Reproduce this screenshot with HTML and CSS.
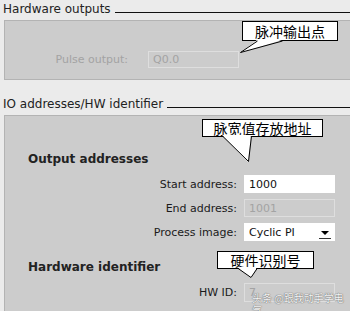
FILE: index.html
```html
<!DOCTYPE html>
<html lang="en">
<head>
    <meta charset="UTF-8">
    <meta name="viewport" content="width=device-width, initial-scale=1.0">
    <title>Pulse generator properties</title>
    <link rel="stylesheet" href="styles.css">
</head>
<body>
    <div class="page">
        <section class="group">
            <div class="group-head">
                <span class="group-title">Hardware outputs</span>
                <span class="group-rule"></span>
            </div>
            <div class="panel panel-outputs">
                <div class="pulse-row">
                    <span class="pulse-label">Pulse output:</span>
                    <span class="field field-off">Q0.0</span>
                </div>
            </div>
        </section>

        <section class="group group-io">
            <div class="group-head">
                <span class="group-title">IO addresses/HW identifier</span>
                <span class="group-rule"></span>
            </div>
            <div class="panel panel-io">
                <h3 class="sub-head">Output addresses</h3>
                <div class="form-grid">
                    <label class="form-label">Start address:</label>
                    <span class="field field-on">1000</span>
                    <label class="form-label">End address:</label>
                    <span class="field field-off">1001</span>
                    <label class="form-label">Process image:</label>
                    <span class="field field-on field-select">Cyclic PI<span class="drop-btn"></span></span>
                </div>
                <h3 class="sub-head sub-head-hw">Hardware identifier</h3>
                <div class="form-grid">
                    <label class="form-label">HW ID:</label>
                    <span class="field field-off field-tall">7</span>
                </div>
            </div>
        </section>

        <!-- annotations -->
        <div class="note note-pulse">脉冲输出点</div>
        <div class="note note-addr">脉宽值存放地址</div>
        <div class="note note-hw">硬件识别号</div>
        <svg class="note-tails" width="350" height="311" viewBox="0 0 350 311">
            <polygon points="257,40 240,53 282,40" fill="#fff"/>
            <polyline points="257.5,41 240.5,52.5 282.5,41" fill="none" stroke="#000" stroke-width="1"/>
            <polygon points="222,135 248,162 251,135" fill="#fff"/>
            <polyline points="222.5,136 248.5,161.5 251.5,136" fill="none" stroke="#000" stroke-width="1"/>
            <polygon points="237,267 251,278 257,267" fill="#fff"/>
            <polyline points="237.5,268 251,277.5 257.5,268" fill="none" stroke="#000" stroke-width="1"/>
        </svg>
        <div class="watermark">头条 @跟我动手学电气</div>
    </div>
</body>
</html>
```

FILE: styles.css
```css
/* 기본 */
body {
    margin: 0;
    background: #ebebeb;
    font-family: 'DejaVu Sans', sans-serif;
    color: #1a1a1a;
    overflow: hidden;
}

.page {
    position: relative;
    width: 350px;
    height: 311px;
    overflow: hidden;
}

/* group header with rule */
.group-head {
    display: flex;
    align-items: flex-start;
    height: 19px;
    padding: 1px 0 0 3px;
}

.group-title {
    font-size: 12px;
    line-height: 16px;
    color: #222;
    white-space: nowrap;
}

.group-rule {
    flex: 1;
    height: 1px;
    background: #111;
    margin: 11px 0 0 4px;
}

.group-io {
    margin-top: 15px;
}

.panel {
    margin-left: 4px;
    background: #cccccc;
    border: 1px solid #b3b3b3;
    border-right: none;
}

.panel-outputs {
    padding: 30px 0 11px;
}

.pulse-row {
    display: flex;
    align-items: center;
}

.pulse-label {
    width: 123px;
    text-align: right;
    font-size: 11px;
    color: #a3a3a3;
    margin-right: 20px;
}

/* fields */
.field {
    box-sizing: border-box;
    display: flex;
    align-items: center;
    width: 91px;
    height: 18px;
    padding-left: 4px;
    font-size: 11px;
    border: 1px solid #dedede;
}

.pulse-row .field {
    height: 17px;
}

.field-on {
    background: #fff;
    border-color: #fff;
    color: #111;
}

.field-off {
    color: #a3a3a3;
}

.form-grid .field-tall {
    height: 19px;
}

.field-select {
    position: relative;
}

.drop-btn {
    position: absolute;
    right: 3px;
    top: 2px;
    width: 12px;
    height: 12px;
    border-bottom: 1px solid #333;
}

.drop-btn::after {
    content: "";
    position: absolute;
    left: 2px;
    top: 5px;
    border-left: 4px solid transparent;
    border-right: 4px solid transparent;
    border-top: 4px solid #000;
}

/* output addresses */
.panel-io {
    height: 200px;
}

.sub-head {
    margin: 35px 0 0 23px;
    font-size: 12px;
    line-height: 16px;
    font-weight: 700;
    color: #222;
}

.sub-head-hw {
    margin-top: 18px;
}

.form-grid {
    display: grid;
    grid-template-columns: 232px 91px;
    column-gap: 7px;
    row-gap: 6px;
    align-items: center;
    margin-top: 8px;
}

.form-label {
    text-align: right;
    font-size: 11px;
    color: #1a1a1a;
}

/* callouts */
.note {
    position: absolute;
    box-sizing: border-box;
    background: #fff;
    border: 1px solid #000;
    font-family: 'Noto Sans CJK SC', sans-serif;
    font-size: 14px;
    line-height: 16px;
    text-align: center;
    color: #000;
}

.note-pulse {
    left: 242px;
    top: 21px;
    width: 96px;
    height: 20px;
    padding-top: 1px;
}

.note-addr {
    left: 202px;
    top: 119px;
    width: 121px;
    height: 18px;
}

.note-hw {
    left: 217px;
    top: 251px;
    width: 97px;
    height: 18px;
}

.note-tails {
    position: absolute;
    left: 0;
    top: 0;
}

.watermark {
    position: absolute;
    left: 252px;
    top: 292px;
    font-family: 'Noto Sans CJK SC', sans-serif;
    font-size: 10px;
    line-height: 12px;
    color: #f5f5f5;
    text-shadow: 0 0 1px #666, 0 0 1px #666;
}
```
